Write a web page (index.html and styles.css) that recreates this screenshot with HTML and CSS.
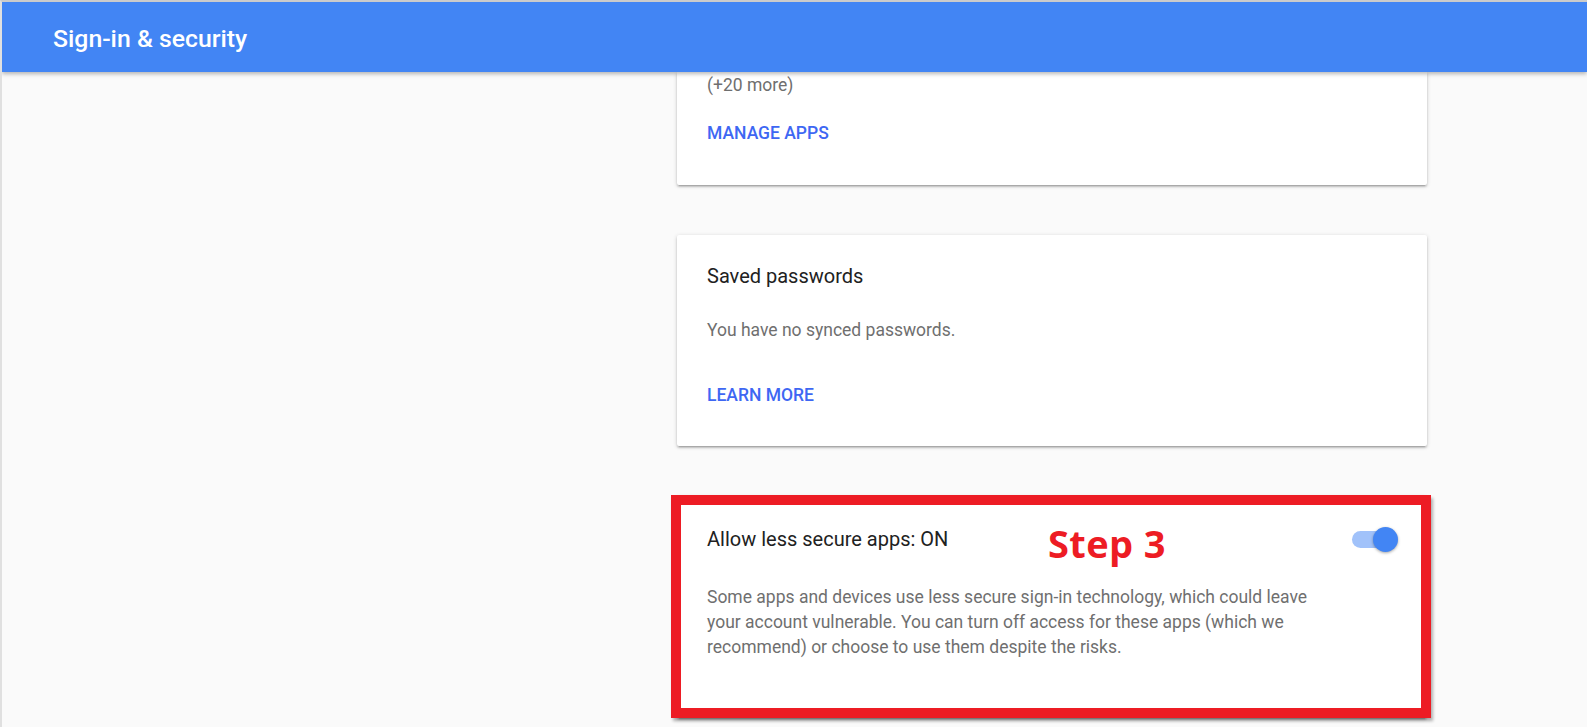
FILE: index.html
```html
<!DOCTYPE html>
<html lang="en">
<head>
<meta charset="utf-8">
<title>Sign-in &amp; security</title>
<link rel="stylesheet" href="styles.css">
</head>
<body>
<header class="appbar">
  <h1 class="appbar-title">Sign-in &amp; security</h1>
</header>
<div class="layout">
  <aside class="nav"></aside>
  <main class="column">
    <section class="card card--scrolled">
      <p class="card-text">(+20 more)</p>
      <div class="card-actions"><a class="btn-link" href="#">MANAGE APPS</a></div>
    </section>

    <section class="card">
      <h2 class="card-title">Saved passwords</h2>
      <p class="card-text card-text--gap">You have no synced passwords.</p>
      <div class="card-actions card-actions--gap"><a class="btn-link" href="#">LEARN MORE</a></div>
    </section>

    <section class="card card--toggle">
      <div class="card-row">
        <h2 class="card-title">Allow less secure apps: ON</h2>
        <span class="switch" role="switch" aria-checked="true"><span class="switch-track"></span><span class="switch-thumb"></span></span>
      </div>
      <p class="card-text card-desc">Some apps and devices use less secure sign-in technology, which could leave your account vulnerable. You can turn off access for these apps (which we recommend) or choose to use them despite the risks.</p>
      <div class="annot-box"></div>
      <div class="annot-label">Step 3</div>
    </section>
  </main>
</div>
</body>
</html>
```

FILE: styles.css
```css
html, body {
  margin: 0;
  padding: 0;
}
html {
  overflow: hidden;
}
body {
  background: #fafafa;
  border-top: 2px solid #cbcbcb;
  border-left: 2px solid #e0e0e0;
  font-family: Roboto, "Liberation Sans", Arial, sans-serif;
  color: #212121;
  min-height: 725px;
}
.appbar {
  position: relative;
  z-index: 2;
  height: 70px;
  background: #4285f4;
  display: flex;
  align-items: center;
  padding-left: 51px;
  box-shadow: 0 2px 4px rgba(0, 0, 0, 0.28);
}
.appbar-title {
  margin: 0;
  padding-top: 2px;
  color: #ffffff;
  font-size: 24.8px;
  font-weight: 500;
  letter-spacing: 0;
}
.layout {
  display: grid;
  grid-template-columns: 675px 750px;
}
.column {
  display: flex;
  flex-direction: column;
  gap: 50px;
}
.card {
  position: relative;
  background: #ffffff;
  border-radius: 2px;
  padding: 29px 30px 29px;
  box-shadow: 0 2px 2px 0 rgba(0, 0, 0, 0.14), 0 3px 1px -2px rgba(0, 0, 0, 0.12), 0 1px 4px 0 rgba(0, 0, 0, 0.18);
}
.card--scrolled {
  padding-top: 1px;
  padding-bottom: 30px;
  border-top-left-radius: 0;
  border-top-right-radius: 0;
}
.card--toggle {
  padding-top: 31px;
  padding-bottom: 58px;
}
.card-title {
  margin: 0;
  font-size: 20px;
  line-height: 25px;
  font-weight: 400;
  color: #212121;
}
.card-text {
  margin: 0;
  font-size: 17.5px;
  line-height: 25px;
  color: #6f6f6f;
}
.card-text--gap {
  margin-top: 29px;
}
.card-actions {
  margin-top: 12px;
  height: 45px;
  display: flex;
  align-items: center;
}
.card-actions--gap {
  margin-top: 29px;
}
.btn-link {
  font-size: 17.5px;
  font-weight: 500;
  color: #3e67f3;
  text-decoration: none;
  letter-spacing: 0;
}
.card-row {
  display: flex;
  align-items: center;
  justify-content: space-between;
  height: 25px;
}
.card-desc {
  margin-top: 33px;
  max-width: 620px;
}
.switch {
  position: relative;
  display: block;
  width: 46px;
  height: 25px;
  margin-right: -1px;
}
.switch-track {
  position: absolute;
  left: 0;
  top: 4px;
  width: 42px;
  height: 17px;
  border-radius: 9px;
  background: #a1c2fa;
}
.switch-thumb {
  position: absolute;
  right: 0;
  top: 0;
  width: 25px;
  height: 25px;
  border-radius: 50%;
  background: #4285f4;
  box-shadow: 0 1px 3px rgba(0, 0, 0, 0.35);
}
.annot-box {
  position: absolute;
  left: -6px;
  right: -4px;
  top: -1px;
  bottom: 0;
  border: 10px solid #ed1c24;
  box-shadow: 2px 3px 3px rgba(0, 0, 0, 0.3);
  pointer-events: none;
}
.annot-label {
  position: absolute;
  left: 371px;
  top: 28px;
  font-family: "Open Sans", "DejaVu Sans", sans-serif;
  font-weight: 700;
  font-size: 38px;
  line-height: 1;
  color: #ed1c24;
  letter-spacing: 0.4px;
}
```
